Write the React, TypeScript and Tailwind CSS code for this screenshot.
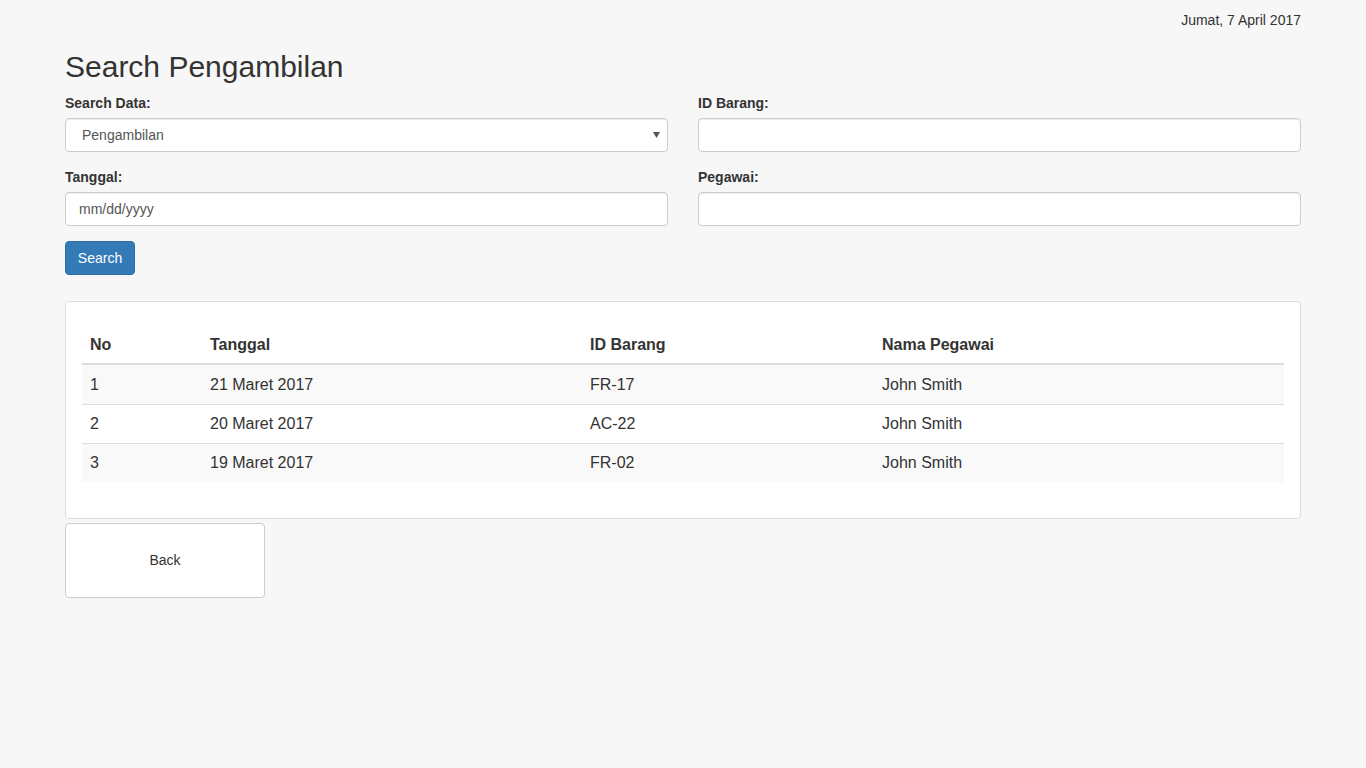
import React from "react";

const rows = [
  { no: "1", tanggal: "21 Maret 2017", id: "FR-17", nama: "John Smith" },
  { no: "2", tanggal: "20 Maret 2017", id: "AC-22", nama: "John Smith" },
  { no: "3", tanggal: "19 Maret 2017", id: "FR-02", nama: "John Smith" },
];

export default function App() {
  return (
    <div
      className="min-h-[768px] w-full bg-[#f7f7f7] text-[#333] text-[14px]"
      style={{ fontFamily: '"Liberation Sans", Arial, Helvetica, sans-serif' }}
    >
      <div className="px-[65px] pt-[10px]">
        <div className="flex justify-end leading-[20px]">Jumat, 7 April 2017</div>
        <h1 className="mt-[20px] text-[30px] leading-[33px] font-normal">Search Pengambilan</h1>

        <div className="mt-[10px] grid grid-cols-2 gap-x-[30px]">
          <div className="mb-[15px]">
            <div className="mb-[5px] font-bold leading-[20px]">Search Data:</div>
            <div className="relative flex h-[34px] items-center rounded-[4px] border border-[#ccc] bg-white pl-[16px] text-[#555] shadow-[inset_0_1px_1px_rgba(0,0,0,0.075)]">
              Pengambilan
              <svg className="absolute right-[7px] top-[13px]" width="7" height="6" viewBox="0 0 7 6">
                <path d="M0 0 L7 0 L3.5 6 Z" fill="#555" />
              </svg>
            </div>
          </div>
          <div className="mb-[15px]">
            <div className="mb-[5px] font-bold leading-[20px]">ID Barang:</div>
            <div className="h-[34px] rounded-[4px] border border-[#ccc] bg-white shadow-[inset_0_1px_1px_rgba(0,0,0,0.075)]" />
          </div>
          <div className="mb-[15px]">
            <div className="mb-[5px] font-bold leading-[20px]">Tanggal:</div>
            <div className="flex h-[34px] items-center rounded-[4px] border border-[#ccc] bg-white pl-[13px] text-[#555] shadow-[inset_0_1px_1px_rgba(0,0,0,0.075)]">
              mm/dd/yyyy
            </div>
          </div>
          <div className="mb-[15px]">
            <div className="mb-[5px] font-bold leading-[20px]">Pegawai:</div>
            <div className="h-[34px] rounded-[4px] border border-[#ccc] bg-white shadow-[inset_0_1px_1px_rgba(0,0,0,0.075)]" />
          </div>
        </div>

        <button className="flex h-[34px] w-[70px] items-center justify-center rounded-[4px] border border-[#2e6da4] bg-[#337ab7] text-[14px] text-white">
          Search
        </button>

        <div className="mt-[26px] rounded-[4px] border border-[#ddd] bg-white px-[16px] pt-[24px] pb-[36px]">
          <div className="flex h-[39px] items-center border-b-2 border-[#ddd] text-[16px] font-bold">
            <div className="w-[120px] px-[8px]">No</div>
            <div className="w-[380px] px-[8px]">Tanggal</div>
            <div className="w-[292px] px-[8px]">ID Barang</div>
            <div className="flex-1 px-[8px]">Nama Pegawai</div>
          </div>
          {rows.map((r, i) => (
            <div
              key={r.no}
              className={
                "flex h-[39px] items-center text-[16px] " +
                (i === 0 ? "h-[38px] " : "border-t border-[#ddd] ") +
                (i % 2 === 0 ? "bg-[#f9f9f9]" : "bg-white")
              }
            >
              <div className="w-[120px] px-[8px]">{r.no}</div>
              <div className="w-[380px] px-[8px]">{r.tanggal}</div>
              <div className="w-[292px] px-[8px]">{r.id}</div>
              <div className="flex-1 px-[8px]">{r.nama}</div>
            </div>
          ))}
        </div>

        <button className="mt-[4px] flex h-[75px] w-[200px] items-center justify-center rounded-[4px] border border-[#ccc] bg-white text-[14px] text-[#333]">
          Back
        </button>
      </div>
    </div>
  );
}
